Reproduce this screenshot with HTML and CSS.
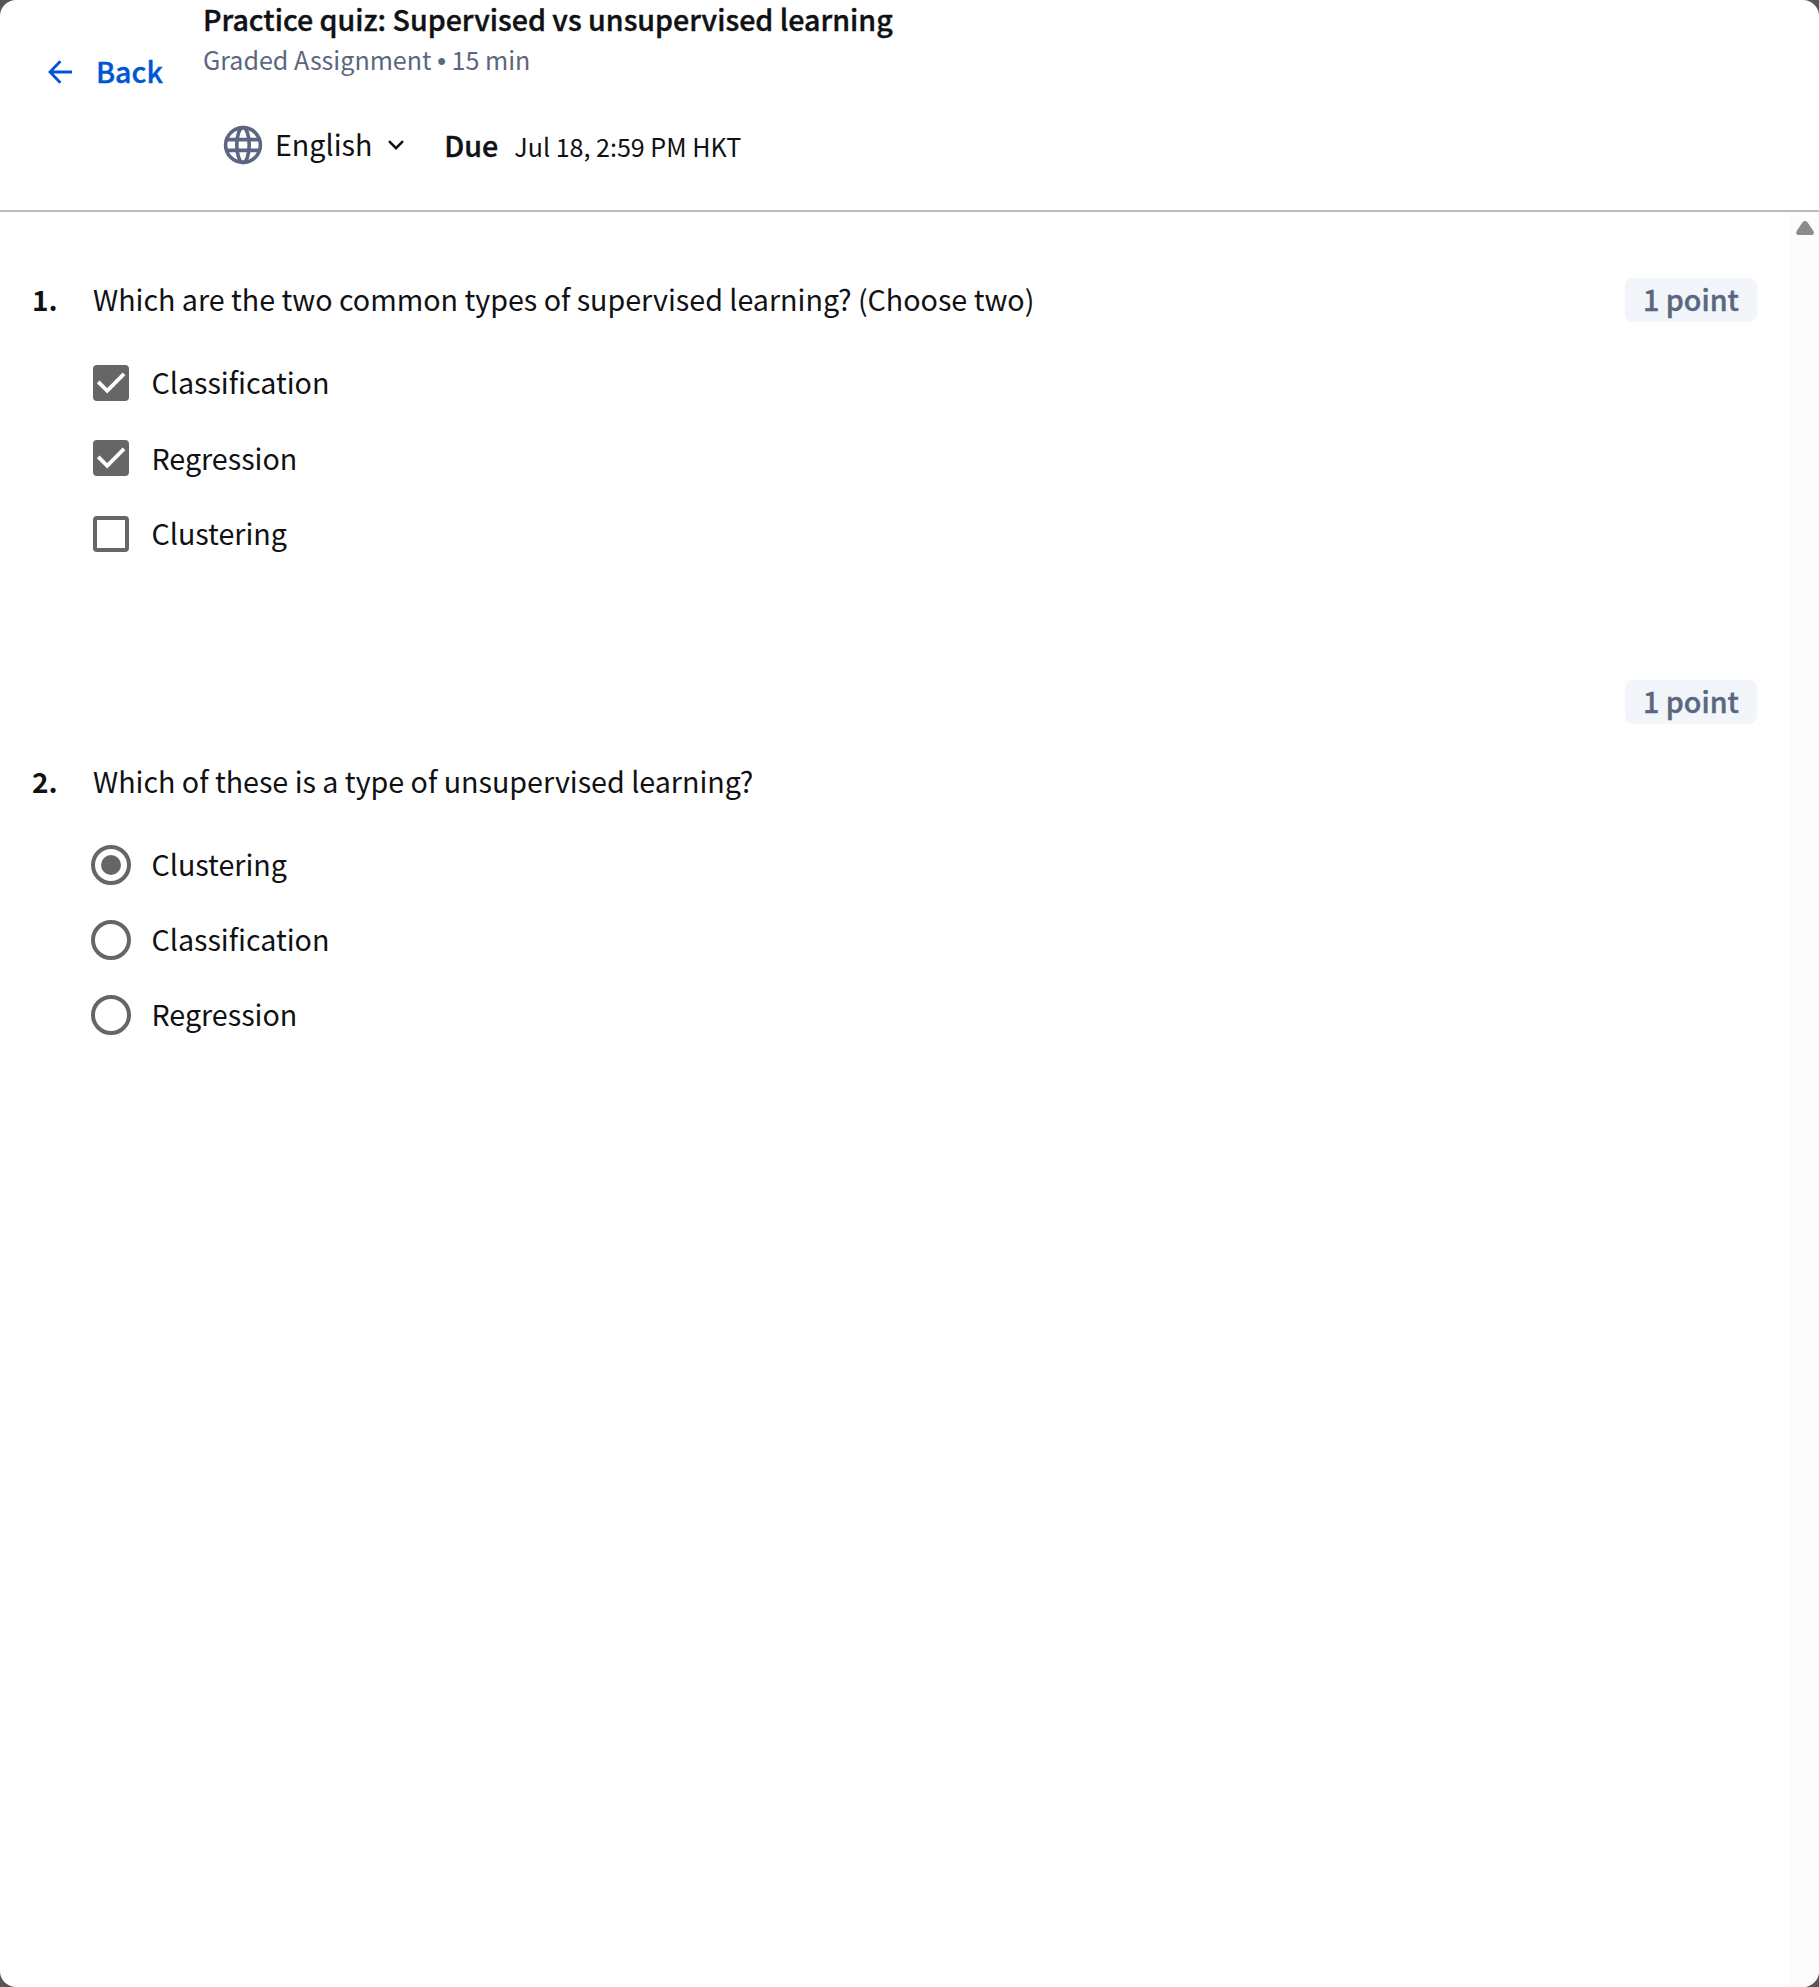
FILE: index.html
```html
<!DOCTYPE html>
<html lang="en">
<head>
<meta charset="utf-8">
<title>Practice quiz</title>
<link rel="stylesheet" href="styles.css">
</head>
<body>
<div class="dialog">
  <header class="header">
    <a class="back">
      <svg class="back-icon" width="24" height="24" viewBox="0 0 24 24"><path d="M12.4 1.2 2 12l10.400 10.800M1.800 12H24" fill="none" stroke="currentColor" stroke-width="2.8"/></svg>
      <span>Back</span>
    </a>
    <div class="summary">
      <h1 class="title">Practice quiz: Supervised vs unsupervised learning</h1>
      <p class="subtitle">Graded Assignment <span class="bullet">•</span> 15 min</p>
      <div class="meta">
        <svg class="globe" width="40" height="40" viewBox="0 0 40 40"><g fill="none" stroke="currentColor" stroke-width="3.6"><circle cx="20" cy="20" r="17.4"/><ellipse cx="20" cy="20" rx="6.200" ry="17.4"/><path d="M3.500 14.600h33M3.500 25.400h33"/></g></svg>
        <span class="language">English</span>
        <svg class="chevron" width="16" height="10" viewBox="0 0 16 10"><path d="m1 1.200 7 7 7-7" fill="none" stroke="currentColor" stroke-width="2.500"/></svg>
        <strong class="due">Due</strong>
        <span class="date">Jul 18, 2:59 PM HKT</span>
      </div>
    </div>
  </header>
  <div class="body">
    <main class="questions">
      <section class="question">
        <div class="prompt-row">
          <span class="number">1.</span>
          <p class="prompt">Which are the two common types of supervised learning? (Choose two)</p>
          <span class="points">1 point</span>
        </div>
        <ul class="options checks">
          <li class="option"><span class="checkbox checked"><svg width="36" height="36" viewBox="0 0 36 36"><path d="m5.200 16.800 9 9L31 8.900" fill="none" stroke="#fff" stroke-width="3.800"/></svg></span><span class="label">Classification</span></li>
          <li class="option"><span class="checkbox checked"><svg width="36" height="36" viewBox="0 0 36 36"><path d="m5.200 16.800 9 9L31 8.900" fill="none" stroke="#fff" stroke-width="3.800"/></svg></span><span class="label">Regression</span></li>
          <li class="option"><span class="checkbox"></span><span class="label">Clustering</span></li>
        </ul>
      </section>
      <section class="question second">
        <div class="points-row"><span class="points">1 point</span></div>
        <div class="prompt-row">
          <span class="number">2.</span>
          <p class="prompt">Which of these is a type of unsupervised learning?</p>
        </div>
        <ul class="options radios">
          <li class="option"><span class="radio"><span class="dot"></span></span><span class="label">Clustering</span></li>
          <li class="option"><span class="radio"></span><span class="label">Classification</span></li>
          <li class="option"><span class="radio"></span><span class="label">Regression</span></li>
        </ul>
      </section>
    </main>
    <div class="scrollbar">
      <svg width="18" height="14" viewBox="0 0 18 14"><path d="M6.600 1.200Q9-1.200 11.400 1.200L17.400 10Q19 14 15.500 14H2.500Q-1 14 .6 10Z" fill="#8b8b8b"/></svg>
    </div>
  </div>
</div>
</body>
</html>
```
FILE: styles.css
```css
* { box-sizing: border-box; }
body {
  margin: 0;
  background: #57565b;
  color: #0f1114;
  font-family: "Noto Sans CJK SC", "Noto Sans", sans-serif;
  font-size: 28.65px;
  line-height: 44px;
}
h1, p, ul { margin: 0; padding: 0; }
ul { list-style: none; }
svg { display: block; flex: none; }
.dialog {
  height: 1987px;
  display: flex;
  flex-direction: column;
  background: #fff;
  border-radius: 16px;
  overflow: hidden;
}
.header {
  height: 212px;
  flex: none;
  display: flex;
  border-bottom: 2px solid #bbb;
}
.back {
  width: 203px;
  height: 44px;
  margin-top: 49px;
  padding-left: 48px;
  display: flex;
  align-items: center;
  gap: 24px;
  color: #0056d2;
}
.back-icon { margin-top: 2px; }
.back, .title, .due, .points {
  font-weight: 500;
  -webkit-text-stroke: 0.4px currentColor;
}
.title { font-size: 28.6px; line-height: 38px; }
.subtitle { margin-top: 1px; font-size: 25.07px; line-height: 40px; color: #5b6780; }
.bullet { font-family: "Liberation Sans", sans-serif; line-height: 1; }
.meta { display: flex; align-items: center; height: 44px; margin-top: 44px; padding-left: 20px; }
.globe { color: #5b6780; }
.language { margin: -2px 0 0 12px; }
.chevron { margin-left: 16px; }
.due { margin-left: 40px; }
.date { margin: 2px 0 0 16px; font-size: 25.07px; }
.body { flex: 1; display: flex; }
.questions { flex: 1; padding: 66px 33px 0 32px; }
.prompt-row { display: flex; height: 44px; line-height: 42px; }
.number { width: 61px; font-size: 28px; font-weight: 700; }
.prompt { flex: 1; }
.points {
  width: 132px;
  height: 44px;
  border-radius: 8px;
  background: #f2f5fa;
  color: #5b6780;
  line-height: 42px;
  text-align: center;
}
.options { padding: 23px 0 0 59px; }
.option { height: 75px; display: flex; align-items: center; }
.checks .option { height: 75.5px; }
.radios { padding-top: 23.5px; }
.checkbox {
  width: 36px;
  height: 36px;
  margin: 0 22.5px 0 2px;
  border: 4px solid #666;
  border-radius: 4px;
}
.checked { background: #666; }
.checked svg { margin: -4px; }
.radio {
  width: 40px;
  height: 40px;
  margin-right: 20.5px;
  border: 4px solid #666;
  border-radius: 50%;
  display: flex;
  align-items: center;
  justify-content: center;
}
.dot { width: 20px; height: 20px; border-radius: 50%; background: #666; }
.label { padding-bottom: 1.5px; }
.second { margin-top: 108.5px; }
.points-row { display: flex; justify-content: flex-end; margin-bottom: 36px; }
.scrollbar { width: 29px; background: #fcfcfc; padding: 9px 0 0 6px; }
```
